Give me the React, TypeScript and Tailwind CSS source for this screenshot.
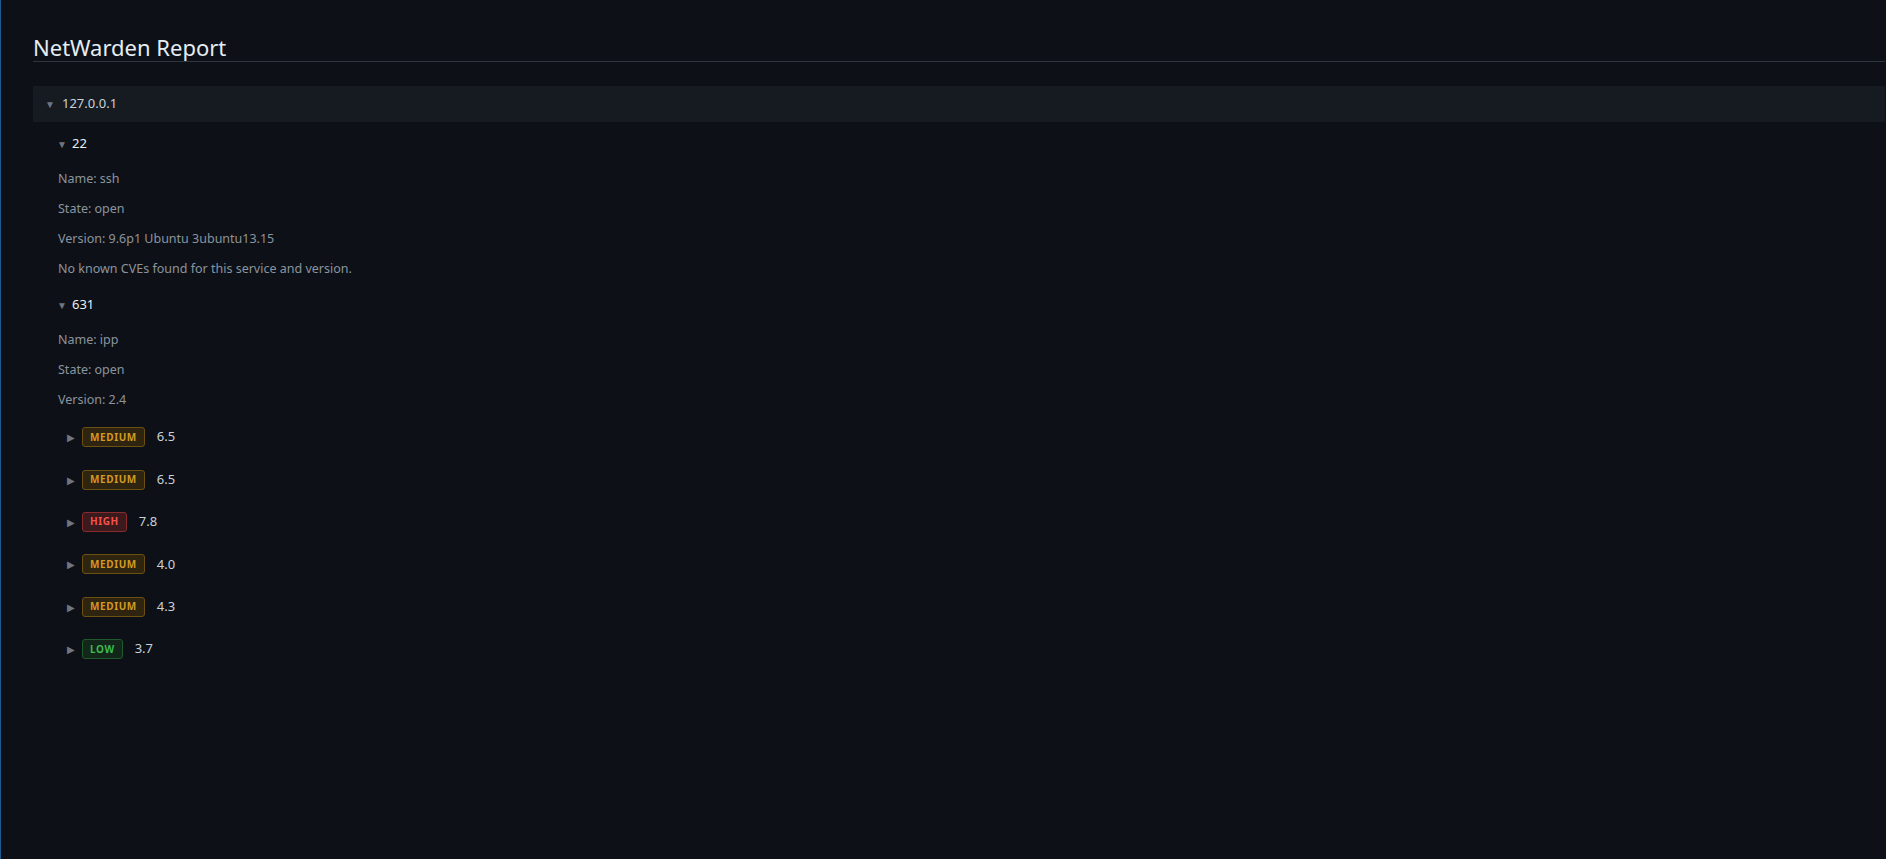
import React from "react";

type Cve = { sev: "MEDIUM" | "HIGH" | "LOW"; score: string };

const cves: Cve[] = [
  { sev: "MEDIUM", score: "6.5" },
  { sev: "MEDIUM", score: "6.5" },
  { sev: "HIGH", score: "7.8" },
  { sev: "MEDIUM", score: "4.0" },
  { sev: "MEDIUM", score: "4.3" },
  { sev: "LOW", score: "3.7" },
];

function Badge({ sev }: { sev: Cve["sev"] }) {
  const cls =
    sev === "HIGH"
      ? "text-[#f85149] bg-[#3a1a1d] border-[#8b2a2c]"
      : sev === "LOW"
      ? "text-[#3fb950] bg-[#12261a] border-[#1f5a2c]"
      : "text-[#d29922] bg-[#2e2410] border-[#6b5012]";
  return (
    <span
      className={`inline-flex items-center h-[20px] px-[7px] rounded-[3px] border text-[10px] font-bold tracking-[0.06em] ${cls}`}
    >
      {sev}
    </span>
  );
}

function Down() {
  return <span className="text-[10px] text-[#6e7681] inline-block w-[10px] leading-none">▼</span>;
}
function Right() {
  return <span className="text-[10px] text-[#6e7681] inline-block w-[10px] leading-none">▶</span>;
}

function Line({ children }: { children: React.ReactNode }) {
  return <div className="h-[30px] flex items-center pl-[10px] text-[12.5px] text-[#8b949e]">{children}</div>;
}

function PortHead({ port, top }: { port: string; top: string }) {
  return (
    <div className={`h-[30px] flex items-center gap-[5px] pl-[9px] mb-[5px] text-[13px] text-[#e6edf3] ${top}`}>
      <Down />
      <span>{port}</span>
    </div>
  );
}

export default function App() {
  return (
    <div
      className="min-h-[859px] bg-[#0d1117] border-l border-[#1e5a8c] pl-[32px] pr-[1px] pt-[33px]"
      style={{ fontFamily: '"Noto Sans", "Open Sans", sans-serif' }}
    >
      <h1 className="text-[22px] leading-[28px] text-[#e6edf3] font-normal border-b border-[#30363d]">
        NetWarden Report
      </h1>
      <div className="mt-[24px]">
        <div className="h-[36px] bg-[#161b22] flex items-center pl-[12px] gap-[7px] text-[13px] text-[#c9d1d9]">
          <Down />
          <span>127.0.0.1</span>
        </div>
        <div className="pl-[15px] pt-[7px]">
          <PortHead port="22" top="mt-0" />
          <Line>Name: ssh</Line>
          <Line>State: open</Line>
          <Line>Version: 9.6p1 Ubuntu 3ubuntu13.15</Line>
          <Line>No known CVEs found for this service and version.</Line>
          <PortHead port="631" top="mt-[6px]" />
          <Line>Name: ipp</Line>
          <Line>State: open</Line>
          <Line>Version: 2.4</Line>
          <div className="pt-[1px]">
            {cves.map((c, i) => (
              <div key={i} className="h-[42.4px] flex items-center pl-[19px] gap-[5px] text-[13px] text-[#c9d1d9]">
                <Right />
                <Badge sev={c.sev} />
                <span className="ml-[7px]">{c.score}</span>
              </div>
            ))}
          </div>
        </div>
      </div>
    </div>
  );
}
